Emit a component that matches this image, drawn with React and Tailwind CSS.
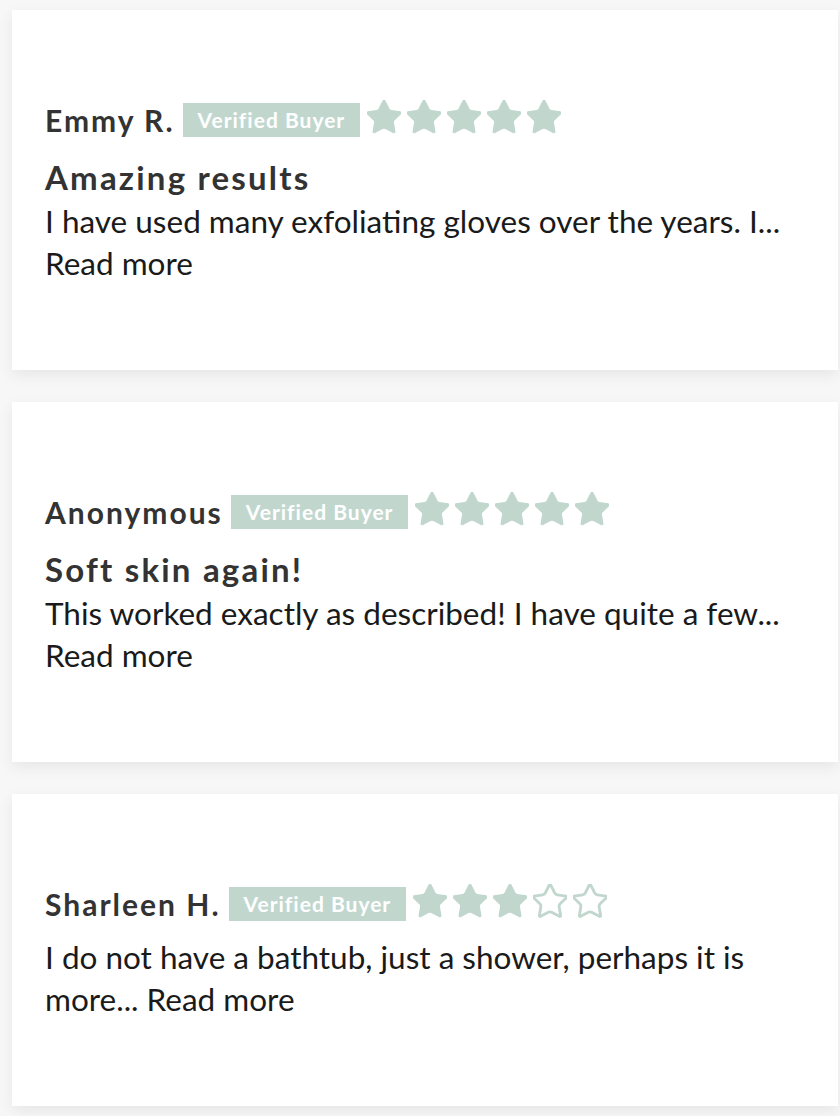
import React from 'react'

const reviews = [
  {
    name: 'Emmy R.',
    rating: 5,
    title: 'Amazing results',
    lines: ['I have used many exfoliating gloves over the years. I...', 'Read more'],
  },
  {
    name: 'Anonymous',
    rating: 5,
    title: 'Soft skin again!',
    lines: ['This worked exactly as described! I have quite a few...', 'Read more'],
  },
  {
    name: 'Sharleen H.',
    rating: 3,
    title: null,
    lines: ['I do not have a bathtub, just a shower, perhaps it is', 'more... Read more'],
  },
]

const Star = ({ filled }) => (
  <svg width="34" height="34" viewBox="1.8 1.6 20.4 20.4" className="shrink-0">
    <path
      d="M11.525 2.295a.53.53 0 0 1 .95 0l2.31 4.679a2.123 2.123 0 0 0 1.595 1.16l5.166.756a.53.53 0 0 1 .294.904l-3.736 3.638a2.123 2.123 0 0 0-.611 1.878l.882 5.14a.53.53 0 0 1-.771.56l-4.618-2.428a2.122 2.122 0 0 0-1.973 0L6.396 21.01a.53.53 0 0 1-.77-.56l.881-5.139a2.122 2.122 0 0 0-.611-1.879L2.16 9.795a.53.53 0 0 1 .294-.906l5.165-.755a2.122 2.122 0 0 0 1.597-1.16z"
      fill={filled ? '#c1d7ce' : 'none'}
      stroke="#c1d7ce"
      strokeWidth={filled ? 1 : 1.7}
      strokeLinejoin="round"
    />
  </svg>
)

const ReviewCard = ({ review }) => (
  <div className="bg-white ml-[12px] mr-[2px] pt-[93px] pb-[86px] px-[33px] shadow-[0_5px_14px_rgba(0,0,0,0.07)]">
    {/* cabecera */}
    <div className="flex items-center h-[34px]">
      <span className="text-[30px] font-bold tracking-[2px] text-[#333333] leading-none">{review.name}</span>
      <span className="ml-[8px] h-[34px] px-[15px] flex items-center bg-[#c1d7ce] text-white text-[21px] font-bold tracking-[1px]">
        Verified Buyer
      </span>
      <div className="ml-[7px] flex gap-[6px] mb-[7px]">
        {[1, 2, 3, 4, 5].map((n) => (
          <Star key={n} filled={n <= review.rating} />
        ))}
      </div>
    </div>

    {review.title && (
      <h3 className="mt-[20px] text-[33px] leading-[40px] font-bold tracking-[2.2px] text-[#333333]">{review.title}</h3>
    )}

    <p className={`${review.title ? 'mt-[3px]' : 'mt-[15px]'} text-[31.5px] leading-[42px] text-[#1a1a1a]`}>
      {review.lines[0]}
      <br />
      {review.lines[1]}
    </p>
  </div>
)

export default function App() {
  return (
    <div className="min-h-[1116px] bg-[#f7f7f7] pt-[10px] pb-[10px] flex flex-col gap-[32px] font-['Lato',sans-serif]">
      {reviews.map((r) => (
        <ReviewCard key={r.name} review={r} />
      ))}
    </div>
  )
}
